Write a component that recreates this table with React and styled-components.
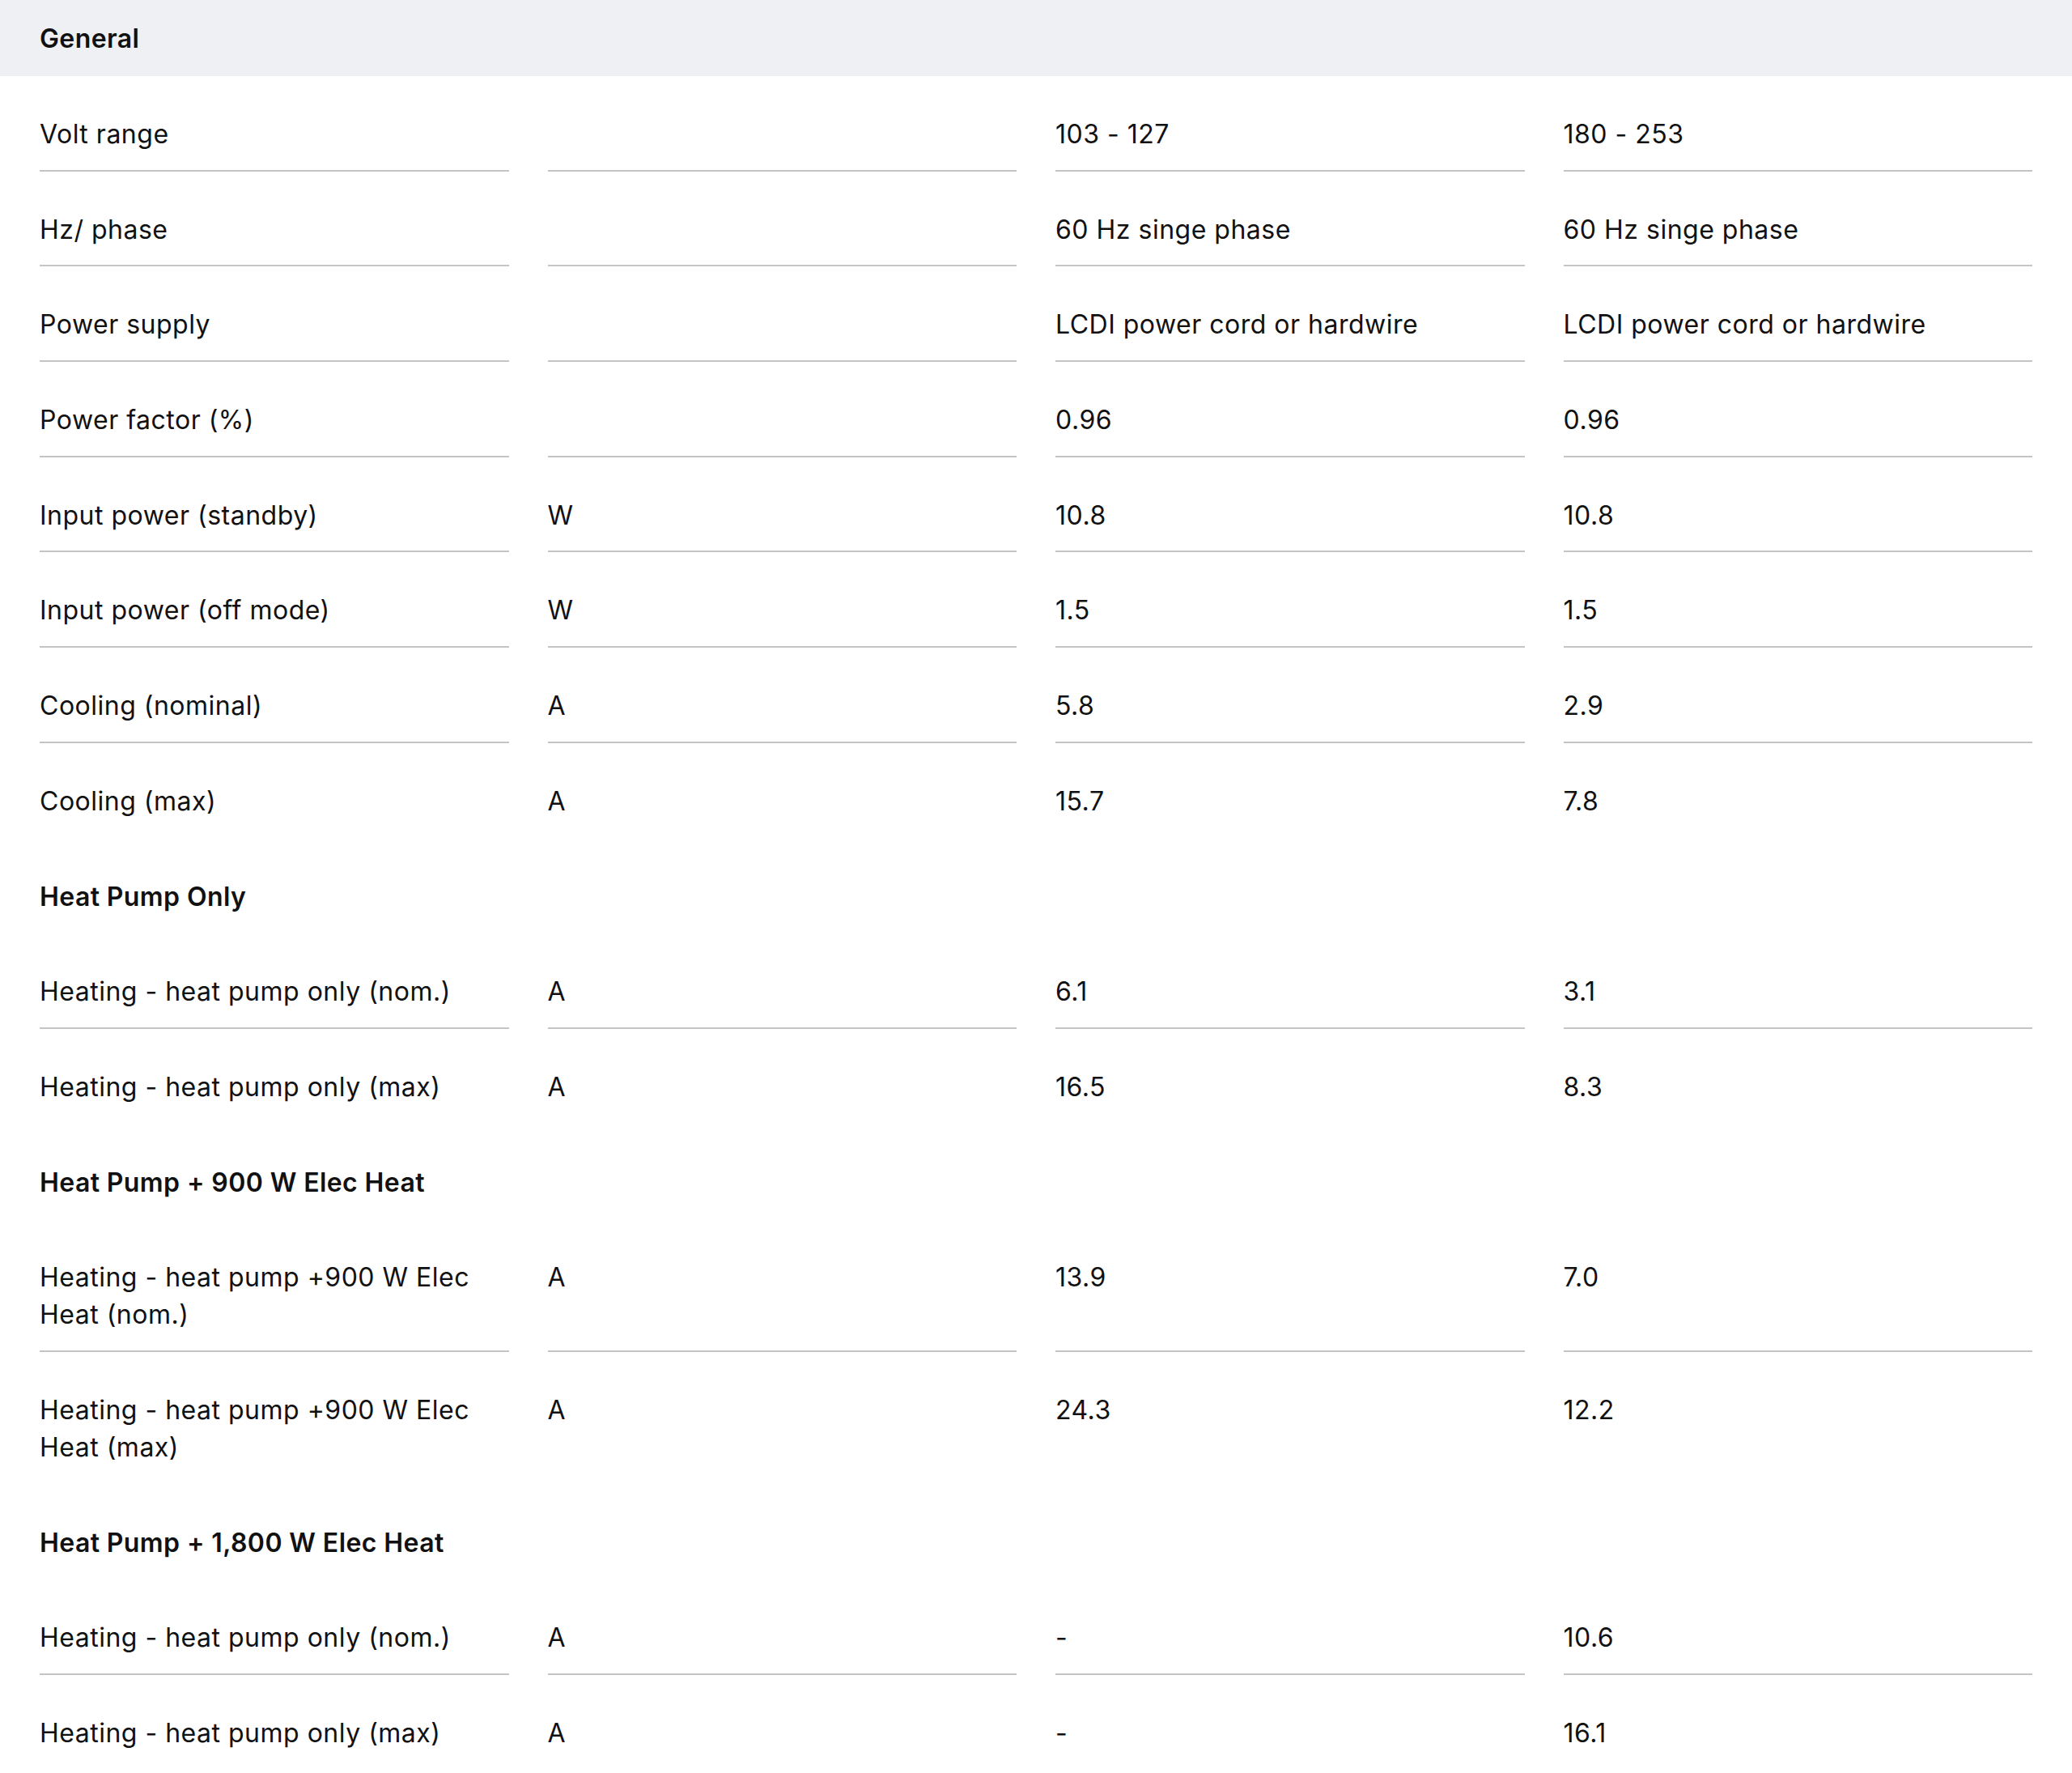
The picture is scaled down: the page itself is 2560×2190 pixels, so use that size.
import styled, { createGlobalStyle } from "styled-components";

const GlobalStyle = createGlobalStyle`
  body {
    margin: 0;
    background: #ffffff;
    font-family: Inter, "Open Sans", sans-serif;
    color: #111111;
  }
`;

const Section = styled.section`
  width: 100%;
`;

const SectionHeader = styled.h2`
  margin: 0;
  height: 94px;
  padding: 0 49px;
  display: flex;
  align-items: center;
  background: #eff0f4;
  font-size: 32px;
  font-weight: 600;
  letter-spacing: 0.4px;
`;

const Table = styled.div`
  padding: 0 49px;
`;

const Row = styled.div`
  display: grid;
  grid-template-columns: repeat(4, 1fr);
  column-gap: 48px;
`;

const Cell = styled.div`
  padding: 49px 0 20.7px;
  font-size: 32px;
  line-height: 46px;
  letter-spacing: 0.5px;
  border-bottom: 2px solid ${(p) => (p.$last ? "transparent" : "#c4c4c4")};
`;

const GroupTitle = styled(Cell)`
  grid-column: 1 / -1;
  font-weight: 600;
  letter-spacing: 0.4px;
  border-bottom-color: transparent;
`;

const groups = [
  {
    title: null,
    rows: [
      ["Volt range", "", "103 - 127", "180 - 253"],
      ["Hz/ phase", "", "60 Hz singe phase", "60 Hz singe phase"],
      ["Power supply", "", "LCDI power cord or hardwire", "LCDI power cord or hardwire"],
      ["Power factor (%)", "", "0.96", "0.96"],
      ["Input power (standby)", "W", "10.8", "10.8"],
      ["Input power (off mode)", "W", "1.5", "1.5"],
      ["Cooling (nominal)", "A", "5.8", "2.9"],
      ["Cooling (max)", "A", "15.7", "7.8"],
    ],
  },
  {
    title: "Heat Pump Only",
    rows: [
      ["Heating - heat pump only (nom.)", "A", "6.1", "3.1"],
      ["Heating - heat pump only (max)", "A", "16.5", "8.3"],
    ],
  },
  {
    title: "Heat Pump + 900 W Elec Heat",
    rows: [
      ["Heating - heat pump +900 W Elec Heat (nom.)", "A", "13.9", "7.0"],
      ["Heating - heat pump +900 W Elec Heat (max)", "A", "24.3", "12.2"],
    ],
  },
  {
    title: "Heat Pump + 1,800 W Elec Heat",
    rows: [
      ["Heating - heat pump only (nom.)", "A", "-", "10.6"],
      ["Heating - heat pump only (max)", "A", "-", "16.1"],
    ],
  },
];

const App = () => {
  return (
    <>
      <GlobalStyle />
      <Section>
        <SectionHeader>General</SectionHeader>
        <Table>
          {groups.map((group, gi) => (
            <div key={gi}>
              {group.title && (
                <Row>
                  <GroupTitle>{group.title}</GroupTitle>
                </Row>
              )}
              {group.rows.map((row, ri) => (
                <Row key={ri}>
                  {row.map((value, ci) => (
                    <Cell key={ci} $last={ri === group.rows.length - 1}>
                      {value}
                    </Cell>
                  ))}
                </Row>
              ))}
            </div>
          ))}
        </Table>
      </Section>
    </>
  );
};

export default App;
